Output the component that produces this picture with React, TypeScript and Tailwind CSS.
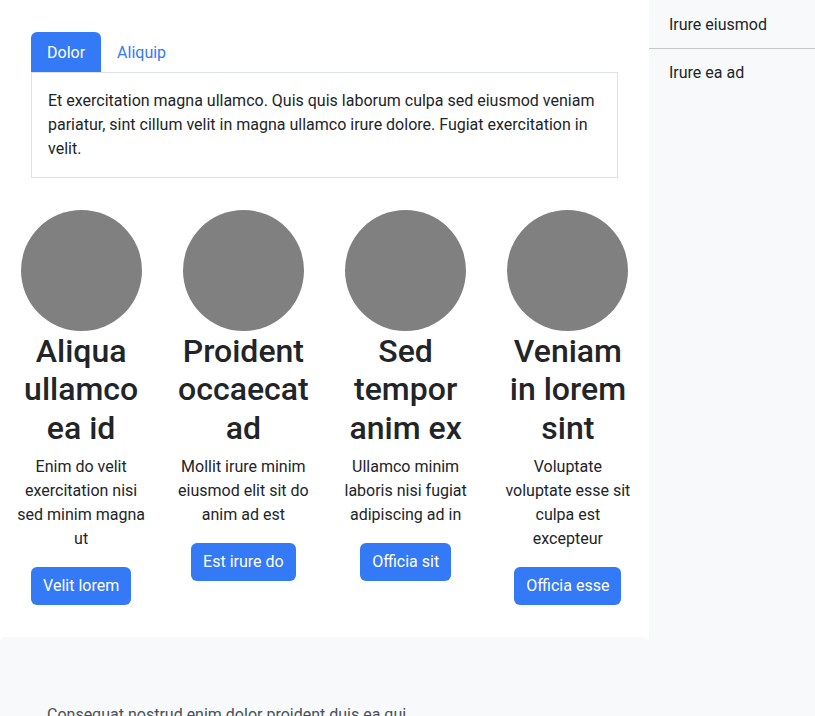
import React from "react";

const cards = [
  { title: "Aliqua ullamco ea id", text: "Enim do velit exercitation nisi sed minim magna ut", btn: "Velit lorem" },
  { title: "Proident occaecat ad", text: "Mollit irure minim eiusmod elit sit do anim ad est", btn: "Est irure do" },
  { title: "Sed tempor anim ex", text: "Ullamco minim laboris nisi fugiat adipiscing ad in", btn: "Officia sit" },
  { title: "Veniam in lorem sint", text: "Voluptate voluptate esse sit culpa est excepteur", btn: "Officia esse" },
];

export default function App() {
  return (
    <div
      className="flex min-h-[716px] bg-white text-[16px] leading-6 text-[#212529]"
      style={{ fontFamily: "Roboto, 'Noto Sans', sans-serif" }}
    >
      <div className="flex w-[649px] shrink-0 flex-col">
        <div className="pb-8">
          <div className="px-[31px] pt-8">
            <div className="flex">
              <button className="h-10 rounded-t-[6px] bg-[#3479f6] px-4 pt-[1px] text-white">Dolor</button>
              <button className="h-10 px-4 pt-[1px] text-[#3479f6]">Aliquip</button>
            </div>
            <div className="w-[587px] border border-[#dee2e6] p-4">
              Et exercitation magna ullamco. Quis quis laborum culpa sed eiusmod veniam pariatur, sint cillum velit in magna ullamco irure dolore. Fugiat exercitation in velit.
            </div>
          </div>
          <div className="mt-8 grid grid-cols-4">
            {cards.map((c) => (
              <div key={c.title} className="flex flex-col items-center px-3 text-center">
                <div className="h-[121px] w-[121px] rounded-full bg-[#808080]" />
                <h2 className="mt-[1px] mb-2 text-[32px] font-medium leading-[38.4px]">{c.title}</h2>
                <p className="mb-4">{c.text}</p>
                <button className="h-[38px] rounded-[6px] bg-[#3479f6] px-3 text-white">{c.btn}</button>
              </div>
            ))}
          </div>
        </div>
        <div className="flex-1 rounded-[5px] bg-[#f8f9fa] px-[47px] pt-[66px] text-[#495057]">
          Consequat nostrud enim dolor proident duis ea qui
        </div>
      </div>
      <div className="w-[166px] shrink-0 bg-[#f8f9fa]">
        <div className="border-b border-[#c6c7c8] px-5 pt-[13px] pb-[11px]">Irure eiusmod</div>
        <div className="px-5 py-3">Irure ea ad</div>
      </div>
    </div>
  );
}
